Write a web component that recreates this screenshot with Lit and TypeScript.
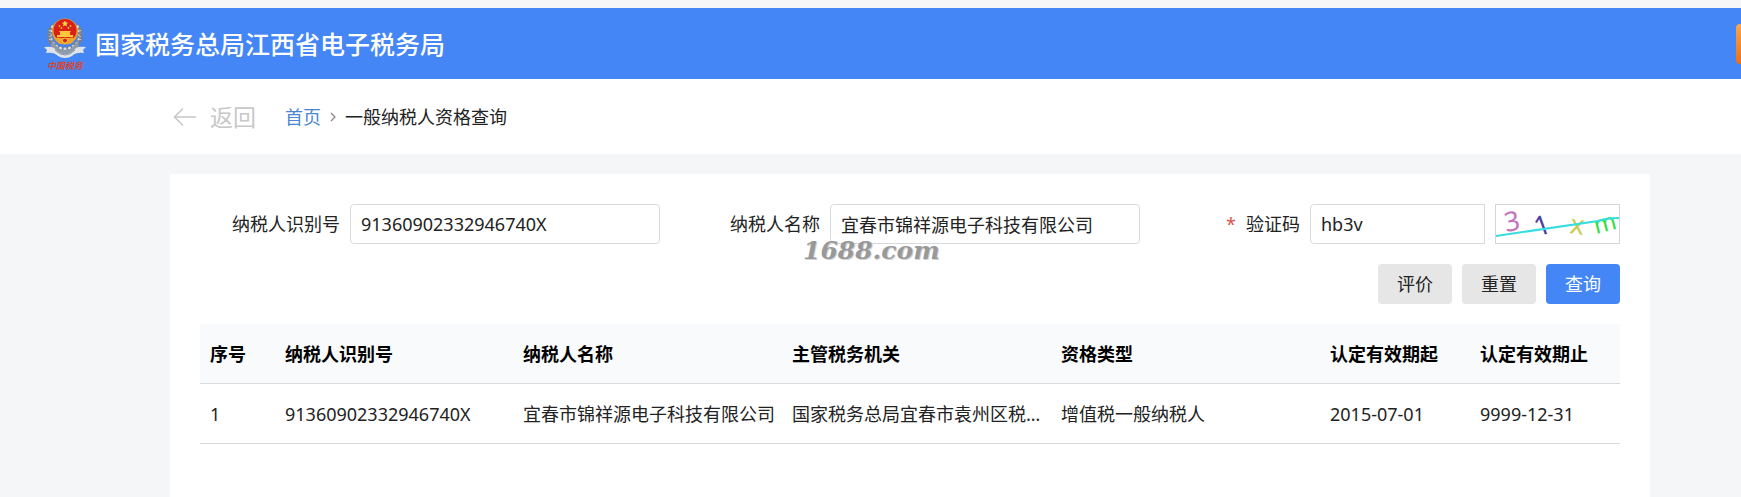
import { LitElement, html, css, svg } from "lit";
import { customElement, state } from "lit/decorators.js";

interface Taxpayer {
  id: string;
  name: string;
  authority: string;
  type: string;
  from: string;
  to: string;
}

const pearls = Array.from({ length: 15 }, (_, i) => {
  const angle = ((-215 + (250 / 14) * i - 0) * Math.PI) / 180;
  return { x: 22 + 15 * Math.cos(-angle), y: 19 + 14 * Math.sin(-angle) };
});

@customElement("tax-emblem")
class TaxEmblem extends LitElement {
  static styles = css`
    :host {
      display: block;
    }
    .emblem {
      display: block;
    }
    .script {
      font: italic 700 9px "Noto Sans CJK SC", sans-serif;
    }
  `;

  render() {
    return html`
      <svg class="emblem" width="44" height="56" viewBox="0 0 44 56" aria-hidden="true">
        ${pearls.map(
          (p) => svg`<circle cx=${p.x} cy=${p.y} r="2.1" fill="#d9dde2" stroke="#66707c" stroke-width=".7" />`
        )}
        <path d="M7 12q-4 14 6 20M37 12q4 14-6 20" fill="none" stroke="#7d7f86" stroke-width="3.500" stroke-dasharray="2 1" />
        <path d="M9 24q5 10 13 10t13-10l1 6q-5 8-14 8T8 30z" fill="#8f9aa8" />
        <path d="M1 31q7-1 10 1 5 6 11 6t11-6q3-2 10-1l-3 3 1 3q-8-1-12 3-3 2-7 2t-7-2q-4-4-12-3l1-3z" fill="#dfe4ea" />
        <path d="M12 34q5 5 10 5t10-5" fill="none" stroke="#8791a0" stroke-width="1" />
        <circle cx="22" cy="15.500" r="13" fill="#e8a02c" />
        <circle cx="22" cy="14.500" r="11.500" fill="#d91f16" />
        <path d="M22 4.500l1 2 2.200.2-1.700 1.500.5 2.200-2-1.200-2 1.200.5-2.200-1.700-1.500 2.200-.2z" fill="#ffd84a" />
        <g fill="#ffc83c">
          <circle cx="16.500" cy="10" r=".9" />
          <circle cx="18.500" cy="12" r=".9" />
          <circle cx="25.500" cy="12" r=".9" />
          <circle cx="27.500" cy="10" r=".9" />
          <path d="M16 15h12l-1.500 2h-9zM14 19h16v2H14zM17 17h10v2H17z" />
        </g>
        <path d="M12 22q4-1 6 0h8q2-1 6 0-2 5-5 6H17q-3-1-5-6z" fill="#f0a428" />
        <circle cx="22" cy="24.500" r="2.500" fill="#c9301c" stroke="#ffd257" stroke-width=".8" />
        <text class="script" x="4" y="53" fill="#d8452f">中国税务</text>
      </svg>
    `;
  }
}

@customElement("captcha-code")
class CaptchaCode extends LitElement {
  static styles = css`
    :host {
      display: block;
      flex: none;
      box-sizing: border-box;
      width: 125px;
      height: 40px;
      border: 1px solid #d3d6db;
      background: #fff;
      overflow: hidden;
    }
    .code {
      display: block;
      font: 27px "Noto Sans", sans-serif;
    }
  `;

  render() {
    return html`
      <svg class="code" width="123" height="38" viewBox="1 1 123 38" role="img" aria-label="验证码">
        <text transform="translate(11 28) rotate(-10)" fill="#c673bd">3</text>
        <text transform="translate(43 33) rotate(-20)" fill="#4d3d9e">1</text>
        <text transform="translate(74 29) rotate(8)" fill="#c9cb4e">x</text>
        <text transform="translate(101 30) rotate(-14)" fill="#2fe03c" font-size="24">m</text>
        <path d="M1 32L103 17q8-3 21-3" fill="none" stroke="#35dde0" stroke-width="2" />
      </svg>
    `;
  }
}

@customElement("app-root")
class AppRoot extends LitElement {
  @state() private taxId = "91360902332946740X";
  @state() private taxName = "宜春市锦祥源电子科技有限公司";
  @state() private code = "hb3v";
  @state() private rows: Taxpayer[] = [
    {
      id: "91360902332946740X",
      name: "宜春市锦祥源电子科技有限公司",
      authority: "国家税务总局宜春市袁州区税务局",
      type: "增值税一般纳税人",
      from: "2015-07-01",
      to: "9999-12-31",
    },
  ];

  static styles = css`
    :host {
      display: flex;
      flex-direction: column;
      min-height: 100vh;
      box-sizing: border-box;
      padding-top: 8px;
      background: #f5f6f8;
      color: #222;
      font: 18px/24px "Noto Sans", "Noto Sans CJK SC", sans-serif;
    }
    .header {
      display: flex;
      align-items: center;
      gap: 8px;
      height: 71px;
      padding-left: 43px;
      overflow: hidden;
      background: #4486f5;
    }
    .title {
      margin: 0;
      color: #fff;
      font-size: 25px;
      line-height: 36px;
      font-weight: 500;
    }
    .login {
      flex: none;
      width: 85px;
      height: 40px;
      margin: 0 -80px 0 auto;
      border: 0;
      border-radius: 4px;
      background: linear-gradient(#f9a650, #ea6f16);
    }
    .crumbs {
      display: flex;
      align-items: center;
      height: 75px;
      padding-left: 173px;
      background: #fff;
    }
    .back {
      display: flex;
      align-items: center;
      gap: 13px;
      margin-right: 29px;
      padding: 0;
      border: 0;
      background: none;
      color: #c8c8c8;
      font: inherit;
      font-size: 23px;
      line-height: 32px;
    }
    .home {
      color: #4a86cf;
      text-decoration: none;
    }
    .chevron {
      margin: 0 8px;
    }
    .card {
      position: relative;
      flex: 1;
      margin: 20px 91px 0 170px;
      padding: 30px;
      background: #fff;
    }
    .form {
      display: grid;
      grid-template-columns: repeat(3, minmax(0, 1fr));
      gap: 20px;
    }
    .field {
      display: flex;
      align-items: center;
    }
    .label {
      flex: none;
      width: 140px;
      margin-right: 10px;
      text-align: right;
    }
    .required {
      margin-right: 10px;
      color: #d9534f;
    }
    .input {
      flex: 1;
      min-width: 0;
      height: 40px;
      box-sizing: border-box;
      padding: 0 10px;
      border: 1px solid #d6d9de;
      border-radius: 4px;
      outline: 0;
      background: #fff;
      color: #222;
      font: inherit;
    }
    .joined {
      margin-right: 10px;
      border-radius: 4px 0 0 4px;
    }
    .actions {
      grid-column: 1 / -1;
      display: flex;
      justify-content: flex-end;
      gap: 10px;
    }
    .button {
      height: 40px;
      padding: 0 19px;
      border: 0;
      border-radius: 4px;
      background: #e6e6e6;
      color: #222;
      font: inherit;
    }
    .primary {
      background: #4486f5;
      color: #fff;
    }
    .table {
      width: 100%;
      margin-top: 20px;
      border-collapse: separate;
      border-spacing: 0;
      table-layout: fixed;
    }
    .cell {
      height: 60px;
      box-sizing: border-box;
      padding: 0 5px 0 10px;
      border-bottom: 1px solid #d6d9de;
      overflow: hidden;
      text-align: left;
      text-overflow: ellipsis;
      white-space: nowrap;
    }
    .head {
      background: #f8fafc;
      color: #000;
      font-weight: 700;
    }
    .no {
      width: 75px;
    }
    .tax-id {
      width: 238px;
    }
    .wide {
      width: 269px;
    }
    .date {
      width: 150px;
    }
    .watermark {
      position: absolute;
      left: 633px;
      top: 62px;
      color: #8f8f8f;
      font: italic 700 25px/30px "DejaVu Serif", serif;
      text-shadow: 1px 1px 0 #d0d0d0;
      opacity: 0.9;
      pointer-events: none;
    }
  `;

  private reset() {
    this.taxId = "";
    this.taxName = "";
    this.code = "";
  }

  render() {
    return html`
      <header class="header">
        <tax-emblem></tax-emblem>
        <h1 class="title">国家税务总局江西省电子税务局</h1>
        <button class="login" type="button" aria-label="登录"></button>
      </header>
      <nav class="crumbs">
        <button class="back" type="button">
          <svg width="24" height="20" viewBox="0 0 24 20" fill="none" stroke="currentColor" stroke-width="1.600" aria-hidden="true">
            <path d="M23 10H2M10 1.500L1.500 10l8.500 8.500" />
          </svg>
          返回
        </button>
        <a class="home" href="#">首页</a>
        <svg class="chevron" width="8" height="10" viewBox="0 0 8 10" fill="none" stroke="#888" stroke-width="1.300" aria-hidden="true">
          <path d="M2 1l4 4-4 4" />
        </svg>
        <span>一般纳税人资格查询</span>
      </nav>
      <main class="card">
        <form class="form" @submit=${(e: Event) => e.preventDefault()}>
          <div class="field">
            <label class="label" for="tax-id">纳税人识别号</label>
            <input class="input" id="tax-id" .value=${this.taxId} />
          </div>
          <div class="field">
            <label class="label" for="tax-name">纳税人名称</label>
            <input class="input" id="tax-name" .value=${this.taxName} />
          </div>
          <div class="field">
            <label class="label" for="code"><span class="required">*</span>验证码</label>
            <input class="input joined" id="code" .value=${this.code} />
            <captcha-code></captcha-code>
          </div>
          <div class="actions">
            <button class="button" type="button">评价</button>
            <button class="button" type="button" @click=${this.reset}>重置</button>
            <button class="button primary" type="submit">查询</button>
          </div>
        </form>
        <table class="table">
          <thead>
            <tr>
              <th class="cell head no">序号</th>
              <th class="cell head tax-id">纳税人识别号</th>
              <th class="cell head wide">纳税人名称</th>
              <th class="cell head wide">主管税务机关</th>
              <th class="cell head wide">资格类型</th>
              <th class="cell head date">认定有效期起</th>
              <th class="cell head date">认定有效期止</th>
            </tr>
          </thead>
          <tbody>
            ${this.rows.map(
              (r, i) => html`
                <tr>
                  <td class="cell">${i + 1}</td>
                  <td class="cell">${r.id}</td>
                  <td class="cell">${r.name}</td>
                  <td class="cell">${r.authority}</td>
                  <td class="cell">${r.type}</td>
                  <td class="cell">${r.from}</td>
                  <td class="cell">${r.to}</td>
                </tr>
              `
            )}
          </tbody>
        </table>
        <div class="watermark">1688.com</div>
      </main>
    `;
  }
}
